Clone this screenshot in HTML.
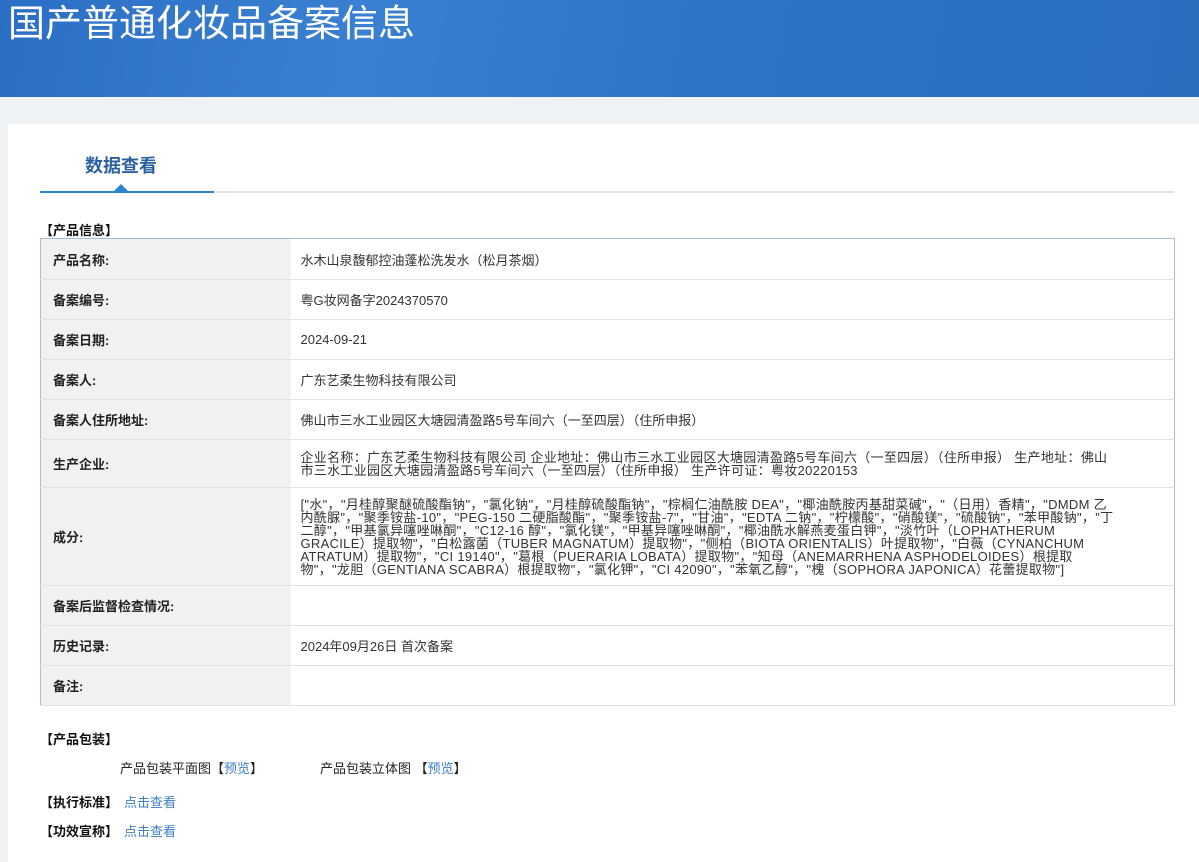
<!DOCTYPE html>
<html><head><meta charset="utf-8"><style>
*{margin:0;padding:0;box-sizing:border-box}
body{width:1199px;height:862px;background:#eef2f5;font-family:"Liberation Sans","Noto Sans CJK SC",sans-serif;font-size:13px;color:#333;position:relative;overflow:hidden}
.hdr{position:absolute;left:0;top:0;width:1199px;height:97px;background:linear-gradient(100deg,#2a6fc4 0%,#3a80d2 30%,#2b74c8 60%,#2a6ec0 100%);overflow:hidden}
.hdr h1{position:absolute;left:8px;top:2px;font-size:37px;font-weight:normal;color:#fff;line-height:44px}
.card{position:absolute;left:8px;top:124px;width:1191px;height:738px;background:#fff}
.tab{position:absolute;left:85px;top:152px;font-size:18px;font-weight:bold;color:#2b5f9e}
.gl{position:absolute;left:40px;top:191px;width:1134px;height:2px;background:#e3e3e3}
.bl{position:absolute;left:40px;top:191px;width:174px;height:2px;background:#2b86d0}
.tri{position:absolute;left:114px;top:184px;width:0;height:0;border-left:7px solid transparent;border-right:7px solid transparent;border-bottom:7px solid #2b86d0}
.sec{position:absolute;font-weight:bold;color:#111}
table{position:absolute;left:40px;top:238px;width:1135px;border-collapse:collapse;border:1px solid #a9bdd5}
td{border-bottom:1px solid #e3e3e3;vertical-align:middle}
td.l{width:250px;background:#f1f1f1;font-weight:bold;padding-left:12px;color:#222}
td.v{padding-left:10px;padding-right:55px}
.ing{line-height:13px;letter-spacing:0.3px}
a{color:#3d7ec4;text-decoration:none}
.t{position:absolute;color:#222}
.lk{font-weight:normal;margin-left:6px}
</style></head><body>
<div class="hdr"><h1>国产普通化妆品备案信息</h1></div>
<div class="card"></div>
<div class="tab">数据查看</div>
<div class="gl"></div><div class="bl"></div><div class="tri"></div>
<div class="sec" style="left:40px;top:220px">【产品信息】</div>
<table>
<tr style="height:41px"><td class="l">产品名称:</td><td class="v">水木山泉馥郁控油蓬松洗发水（松月茶烟）</td></tr>
<tr style="height:40px"><td class="l">备案编号:</td><td class="v">粤G妆网备字2024370570</td></tr>
<tr style="height:40px"><td class="l">备案日期:</td><td class="v">2024-09-21</td></tr>
<tr style="height:40px"><td class="l">备案人:</td><td class="v">广东艺柔生物科技有限公司</td></tr>
<tr style="height:40px"><td class="l">备案人住所地址:</td><td class="v">佛山市三水工业园区大塘园清盈路5号车间六（一至四层）（住所申报）</td></tr>
<tr style="height:48px"><td class="l">生产企业:</td><td class="v ing">企业名称：广东艺柔生物科技有限公司 企业地址：佛山市三水工业园区大塘园清盈路5号车间六（一至四层）（住所申报） 生产地址：佛山市三水工业园区大塘园清盈路5号车间六（一至四层）（住所申报） 生产许可证：粤妆20220153</td></tr>
<tr style="height:98px"><td class="l">成分:</td><td class="v ing">["水"，"月桂醇聚醚硫酸酯钠"，"氯化钠"，"月桂醇硫酸酯钠"，"棕榈仁油酰胺 DEA"，"椰油酰胺丙基甜菜碱"，"（日用）香精"，"DMDM 乙内酰脲"，"聚季铵盐-10"，"PEG-150 二硬脂酸酯"，"聚季铵盐-7"，"甘油"，"EDTA 二钠"，"柠檬酸"，"硝酸镁"，"硫酸钠"，"苯甲酸钠"，"丁二醇"，"甲基氯异噻唑啉酮"，"C12-16 醇"，"氯化镁"，"甲基异噻唑啉酮"，"椰油酰水解燕麦蛋白钾"，"淡竹叶（LOPHATHERUM GRACILE）提取物"，"白松露菌（TUBER MAGNATUM）提取物"，"侧柏（BIOTA ORIENTALIS）叶提取物"，"白薇（CYNANCHUM ATRATUM）提取物"，"CI 19140"，"葛根（PUERARIA LOBATA）提取物"，"知母（ANEMARRHENA ASPHODELOIDES）根提取物"，"龙胆（GENTIANA SCABRA）根提取物"，"氯化钾"，"CI 42090"，"苯氧乙醇"，"槐（SOPHORA JAPONICA）花蕾提取物"]</td></tr>
<tr style="height:40px"><td class="l">备案后监督检查情况:</td><td class="v"></td></tr>
<tr style="height:40px"><td class="l">历史记录:</td><td class="v">2024年09月26日 首次备案</td></tr>
<tr style="height:40px"><td class="l">备注:</td><td class="v"></td></tr>
</table>
<div class="sec" style="left:40px;top:729px">【产品包装】</div>
<div class="t" style="left:120px;top:758px">产品包装平面图【<a>预览</a>】</div>
<div class="t" style="left:320px;top:758px">产品包装立体图 【<a>预览</a>】</div>
<div class="sec" style="left:40px;top:792px">【执行标准】<a class="lk">点击查看</a></div>
<div class="sec" style="left:40px;top:821px">【功效宣称】<a class="lk">点击查看</a></div>
</body></html>
